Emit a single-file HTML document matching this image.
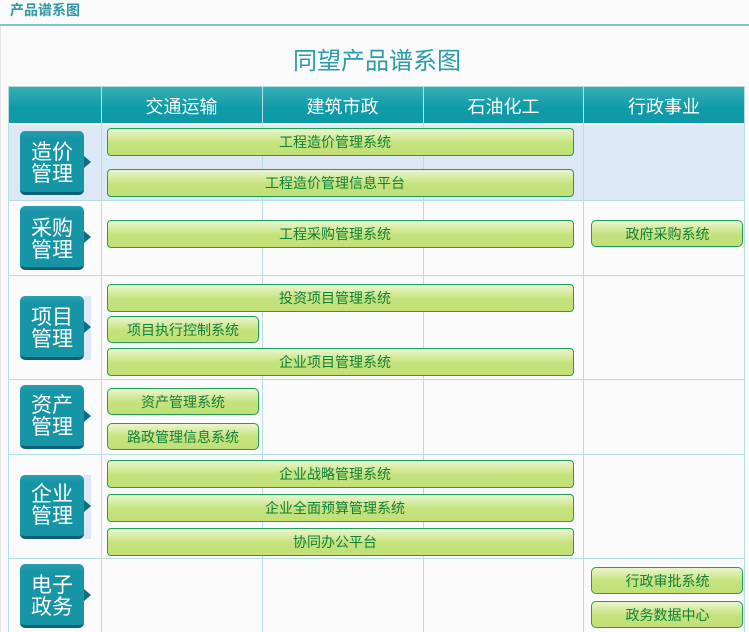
<!DOCTYPE html>
<html><head><meta charset="utf-8"><style>
html,body{margin:0;padding:0}
body{width:749px;height:632px;overflow:hidden;position:relative;background:#fafafa;font-family:"Liberation Sans","Noto Sans CJK SC",sans-serif}
div{position:absolute;box-sizing:border-box}
.v{width:1px;top:87px;height:545px;background:#b5dde2}
.h{left:8px;width:737px;height:1px;background:#b5dde2}
.th{top:87px;height:36px;background:linear-gradient(#35adb6,#0f9aa8 60%,#0f9aa8);color:#fff;font-size:18px;line-height:41px;text-align:center;border-left:1px solid #b5e0e5}
.b{height:28px;border:1px solid #1f9e5a;border-radius:4px;background:linear-gradient(#eaf5cc 0,#c4e27c 55%,#c2e076 100%);color:#107f38;font-size:14px;line-height:27px;text-align:center}
.l{left:107px;width:467px;padding-right:11px}.s{left:107px;width:152px;height:27px;border-radius:5px}.r{left:591px;width:152px;height:27px;border-radius:5px;padding-left:1px}
.bd{left:20px;width:64px;height:64px;border-radius:5px;background:linear-gradient(#2a9fae,#1595a6 12%,#1595a6);border-bottom:3px solid #0d5f78;color:#fff;font-size:21px;line-height:22px;text-align:center;padding-top:11px}
.bd:after{content:"";position:absolute;left:64px;top:25px;border-left:7px solid #0d6d86;border-top:6px solid transparent;border-bottom:6px solid transparent}
.bg{left:84px;width:7px;height:64px;background:#dce8f5}
</style></head><body>
<div style="left:10px;top:1px;font-size:14px;font-weight:bold;color:#2f9aa5;line-height:18px">产品谱系图</div>
<div style="left:0;top:24px;width:749px;height:2px;background:#7cc4cc"></div>
<div style="left:0;top:26px;width:1px;height:606px;background:#e4e4e4"></div>
<div style="left:293px;top:46px;white-space:nowrap;font-size:24px;line-height:32px;color:#2a9ca6">同望产品谱系图</div>
<div style="left:9px;top:125px;width:735px;height:75px;background:#dce8f5"></div>
<div class="v" style="left:8px"></div><div class="v" style="left:101px"></div><div class="v" style="left:262px"></div><div class="v" style="left:423px"></div><div class="v" style="left:583px"></div><div class="v" style="left:744px"></div>
<div class="h" style="top:86px"></div><div class="h" style="top:200px"></div><div class="h" style="top:275px"></div><div class="h" style="top:379px"></div><div class="h" style="top:454px"></div><div class="h" style="top:558px"></div>
<div class="th" style="left:9px;width:92px;border-left:0"></div>
<div class="th" style="left:101px;width:161px;padding-right:1px">交通运输</div>
<div class="th" style="left:262px;width:161px;padding-right:1px">建筑市政</div>
<div class="th" style="left:423px;width:160px">石油化工</div>
<div class="th" style="left:583px;width:161px">行政事业</div>
<div class="bg" style="top:296px"></div>
<div class="bd" style="top:131px">造价<br>管理</div>
<div class="bd" style="top:206px;padding-top:12px">采购<br>管理</div>
<div class="bd" style="top:296px">项目<br>管理</div>
<div class="bd" style="top:385px;padding-top:10px">资产<br>管理</div>
<div class="bg" style="top:475px"></div>
<div class="bd" style="top:475px;padding-top:9px">企业<br>管理</div>
<div class="bd" style="top:564px">电子<br>政务</div>
<div class="b l" style="top:128px">工程造价管理系统</div>
<div class="b l" style="top:169px">工程造价管理信息平台</div>
<div class="b l" style="top:220px">工程采购管理系统</div>
<div class="b r" style="top:220px">政府采购系统</div>
<div class="b l" style="top:284px">投资项目管理系统</div>
<div class="b s" style="top:316px">项目执行控制系统</div>
<div class="b l" style="top:348px">企业项目管理系统</div>
<div class="b s" style="top:388px">资产管理系统</div>
<div class="b s" style="top:423px">路政管理信息系统</div>
<div class="b l" style="top:460px">企业战略管理系统</div>
<div class="b l" style="top:494px">企业全面预算管理系统</div>
<div class="b l" style="top:528px">协同办公平台</div>
<div class="b r" style="top:567px">行政审批系统</div>
<div class="b r" style="top:601px">政务数据中心</div>
</body></html>
